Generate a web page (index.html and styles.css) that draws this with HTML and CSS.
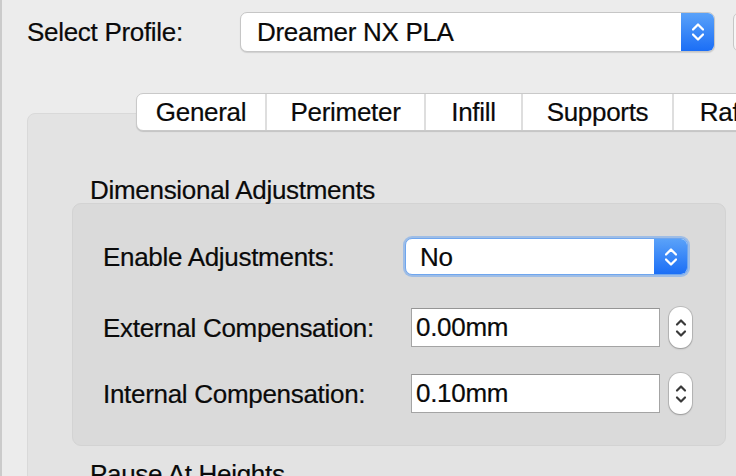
FILE: index.html
```html
<!DOCTYPE html>
<html lang="en">

<head>
    <meta charset="UTF-8">
    <meta name="viewport" content="width=device-width, initial-scale=1.0">
    <title>Profile Settings</title>
    <link rel="stylesheet" href="styles.css">
</head>

<body>
    <div class="window">
        <div class="profile-row">
            <span class="label profile-label">Select Profile:</span>
            <div class="popup profile-popup">
                <span class="popup-value">Dreamer NX PLA</span>
                <span class="popup-arrows">
                    <svg width="12" height="20" viewBox="0 0 12 20">
                        <path d="M1 7.5 L6 2.5 L11 7.5 M1 12.5 L6 17.5 L11 12.5" />
                    </svg>
                </span>
            </div>
            <div class="side-btn"></div>
        </div>

        <div class="pane">
            <div class="tabs">
                <div class="tab tab-general">General</div>
                <div class="tab tab-perimeter">Perimeter</div>
                <div class="tab tab-infill">Infill</div>
                <div class="tab tab-supports">Supports</div>
                <div class="tab tab-raft">Raft</div>
            </div>

            <div class="group-title">Dimensional Adjustments</div>
            <div class="group">
                <div class="row">
                    <span class="label row-label">Enable Adjustments:</span>
                    <div class="popup adjust-popup">
                        <span class="popup-value">No</span>
                        <span class="popup-arrows">
                            <svg width="12" height="20" viewBox="0 0 12 20">
                                <path d="M1 7.5 L6 2.5 L11 7.5 M1 12.5 L6 17.5 L11 12.5" />
                            </svg>
                        </span>
                    </div>
                </div>
                <div class="row row-external">
                    <span class="label row-label">External Compensation:</span>
                    <input type="text" class="field" value="0.00mm">
                    <div class="stepper">
                        <svg width="12" height="24" viewBox="0 0 12 24">
                            <path d="M2 8.5 L6 4.5 L10 8.5 M2 15.5 L6 19.5 L10 15.5" />
                        </svg>
                    </div>
                </div>
                <div class="row row-internal">
                    <span class="label row-label">Internal Compensation:</span>
                    <input type="text" class="field" value="0.10mm">
                    <div class="stepper">
                        <svg width="12" height="24" viewBox="0 0 12 24">
                            <path d="M2 8.5 L6 4.5 L10 8.5 M2 15.5 L6 19.5 L10 15.5" />
                        </svg>
                    </div>
                </div>
            </div>

            <div class="group-title next-title">Pause At Heights</div>
        </div>
    </div>
</body>

</html>
```

FILE: styles.css
```css
html,
body {
    margin: 0;
    padding: 0;
}

body {
    font-family: "Liberation Sans", Arial, sans-serif;
    font-size: 26px;
    line-height: 30px;
    letter-spacing: -0.3px;
    color: #0a0a0a;
    -webkit-text-stroke: 0.2px #0a0a0a;
    background: #ececec;
}

.window {
    width: 736px;
    height: 476px;
    box-sizing: border-box;
    overflow: hidden;
    border-left: 2px solid #cbcbcb;
    background: #ececec;
}

/* top row with the profile chooser */
.profile-row {
    display: flex;
    align-items: center;
    padding-top: 12px;
    padding-left: 25px;
}

.profile-label {
    width: 213px;
    flex-shrink: 0;
}

.popup {
    display: flex;
    box-sizing: border-box;
    flex-shrink: 0;
    background: #fff;
    border: 1px solid #c6c6c6;
    border-radius: 7px;
    overflow: hidden;
    box-shadow: 0 1px 1px rgba(0, 0, 0, 0.12);
}

.profile-popup {
    width: 475px;
    height: 40px;
}

.popup-value {
    flex: 1;
    display: flex;
    align-items: center;
    padding-left: 16px;
}

.popup-arrows {
    width: 33px;
    display: flex;
    align-items: center;
    justify-content: center;
    background: linear-gradient(#5aa2f9, #1b6ef6);
}

.popup-arrows path {
    fill: none;
    stroke: #fff;
    stroke-width: 2.3;
    stroke-linecap: round;
    stroke-linejoin: round;
}

.side-btn {
    flex-shrink: 0;
    margin-left: 18px;
    width: 40px;
    height: 40px;
    box-sizing: border-box;
    border: 1px solid #c6c6c6;
    border-radius: 7px;
    background: #f6f6f6;
}

/* tab view */
.pane {
    margin-top: 61px;
    margin-left: 25px;
    width: 760px;
    height: 420px;
    box-sizing: border-box;
    background: #e3e3e3;
    border: 1px solid #d9d9d9;
    border-radius: 8px;
}

.tabs {
    display: flex;
    width: max-content;
    height: 38px;
    box-sizing: border-box;
    margin-top: -21px;
    margin-left: 108px;
    background: #fff;
    border: 1px solid #c9c9c9;
    border-radius: 7px;
    box-shadow: 0 1px 1px rgba(0, 0, 0, 0.14);
}

.tab {
    display: flex;
    align-items: center;
    justify-content: center;
    box-sizing: border-box;
    border-left: 2px solid #dedede;
}

.tab-general {
    width: 128px;
    border-left: none;
}

.tab-perimeter {
    width: 159px;
}

.tab-infill {
    width: 97px;
}

.tab-supports {
    width: 151px;
}

.tab-raft {
    width: 100px;
}

/* group box */
.group-title {
    margin-top: 44px;
    margin-left: 62px;
}

.group {
    width: 654px;
    box-sizing: border-box;
    margin-top: -2px;
    margin-left: 44px;
    padding: 32px 0 31px 30px;
    background: #dadada;
    border: 1px solid #d3d3d3;
    border-radius: 9px;
}

.row {
    display: flex;
    align-items: center;
    height: 41px;
}

.row-external {
    margin-top: 30px;
}

.row-internal {
    margin-top: 25px;
}

.row-label {
    width: 300px;
    flex-shrink: 0;
}

.adjust-popup {
    width: 283px;
    height: 37px;
    margin-left: 2px;
    border-color: #6fa6ee;
    box-shadow: 0 0 0 2px rgba(110, 165, 240, 0.55);
}

.adjust-popup .popup-value {
    padding-left: 14px;
}

.adjust-popup .popup-arrows {
    width: 33px;
}

.field {
    width: 249px;
    height: 39px;
    box-sizing: border-box;
    margin: 0 0 0 8px;
    padding: 0 0 0 4px;
    font-family: inherit;
    font-size: 26px;
    letter-spacing: -0.3px;
    color: #0a0a0a;
    -webkit-text-stroke: 0.2px #0a0a0a;
    background: #fff;
    border: 1px solid #a4a4a4;
    border-top-color: #959595;
    border-radius: 0;
    outline: none;
}

.stepper {
    width: 23px;
    height: 41px;
    margin-left: 9px;
    display: flex;
    align-items: center;
    justify-content: center;
    background: #fff;
    border-radius: 11px;
    box-shadow: 0 0 0 1px rgba(0, 0, 0, 0.13), 0 1px 2px rgba(0, 0, 0, 0.2);
}

.stepper path {
    fill: none;
    stroke: #3a3a3a;
    stroke-width: 2.2;
    stroke-linecap: round;
    stroke-linejoin: round;
}

.next-title {
    margin-top: 13px;
}
```
